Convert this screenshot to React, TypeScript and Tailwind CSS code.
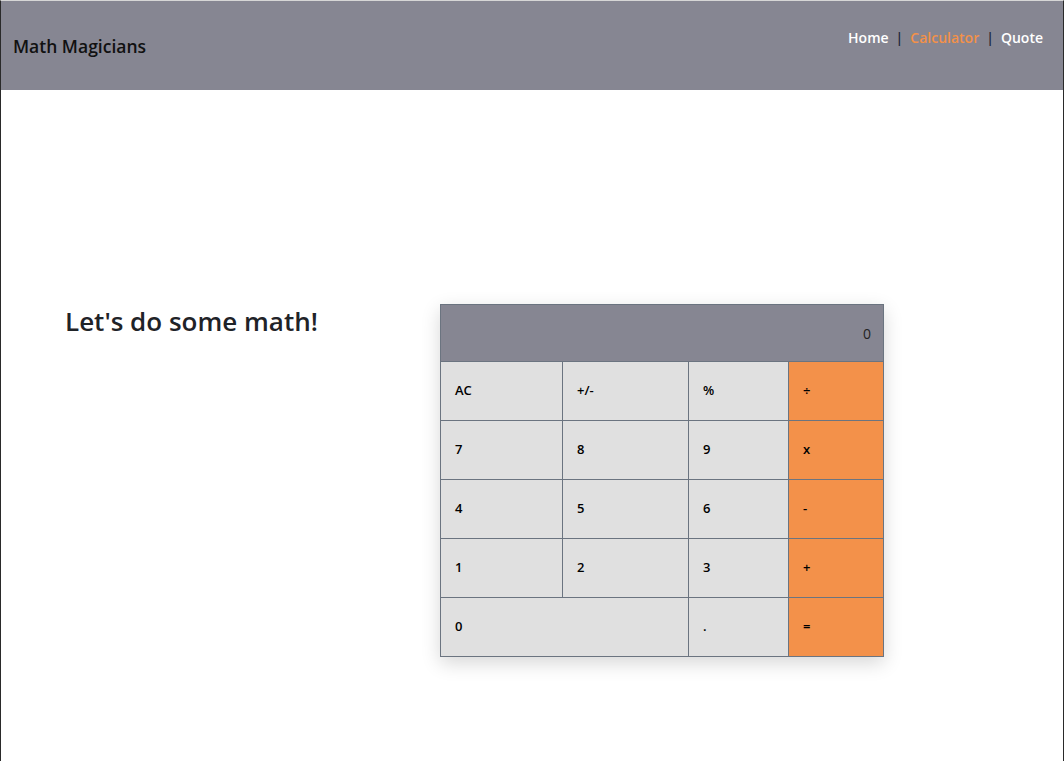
import type { ReactNode } from "react";

const BOTONES: { label: string; naranja?: boolean; ancho?: boolean }[] = [
  { label: "AC" },
  { label: "+/-" },
  { label: "%" },
  { label: "÷", naranja: true },
  { label: "7" },
  { label: "8" },
  { label: "9" },
  { label: "x", naranja: true },
  { label: "4" },
  { label: "5" },
  { label: "6" },
  { label: "-", naranja: true },
  { label: "1" },
  { label: "2" },
  { label: "3" },
  { label: "+", naranja: true },
  { label: "0", ancho: true },
  { label: "." },
  { label: "=", naranja: true },
];

function Enlace({ children, activo }: { children: ReactNode; activo?: boolean }) {
  return (
    <a href="#" className={activo ? "text-[#f39149]" : "text-white"}>
      {children}
    </a>
  );
}

function Calculadora() {
  return (
    <div className="grid w-[444px] grid-cols-[121px_125px_99px_94px] grid-rows-[56px_repeat(5,58px)] gap-px bg-[#6b7480] p-px shadow-[0_6px_18px_rgba(0,0,0,0.16)]">
      <div className="col-span-4 flex items-center justify-end bg-[#868692] pr-[12px] text-[14px] text-[#222]">
        0
      </div>
      {BOTONES.map((b) => (
        <button
          key={b.label}
          type="button"
          className={`flex items-center pl-[14px] text-left text-[13px] font-semibold text-black ${
            b.naranja ? "bg-[#f3914a]" : "bg-[#e0e0e0]"
          } ${b.ancho ? "col-span-2" : ""}`}
        >
          {b.label}
        </button>
      ))}
    </div>
  );
}

export default function App() {
  return (
    <div className="h-[761px] w-full overflow-hidden border-x border-t border-x-[#2a2a2a] border-t-[#d6d6d6] bg-white font-['Open_Sans','Lato',sans-serif]">
      <header className="flex h-[89px] items-start justify-between bg-[#868692] px-[12px]">
        <h1 className="mt-[32px] text-[17.5px] font-semibold text-[#111]">Math Magicians</h1>
        <nav className="mt-[26px] flex items-center gap-[7px] pr-[8px] text-[14px] font-semibold">
          <Enlace>Home</Enlace>
          <span className="text-[#1e293b]">|</span>
          <Enlace activo>Calculator</Enlace>
          <span className="text-[#1e293b]">|</span>
          <Enlace>Quote</Enlace>
        </nav>
      </header>

      <main className="flex items-start pl-[64px] pt-[214px]">
        <h2 className="-mt-[2px] w-[375px] text-[26px] font-semibold text-[#1f2328]">Let's do some math!</h2>
        <Calculadora />
      </main>
    </div>
  );
}
